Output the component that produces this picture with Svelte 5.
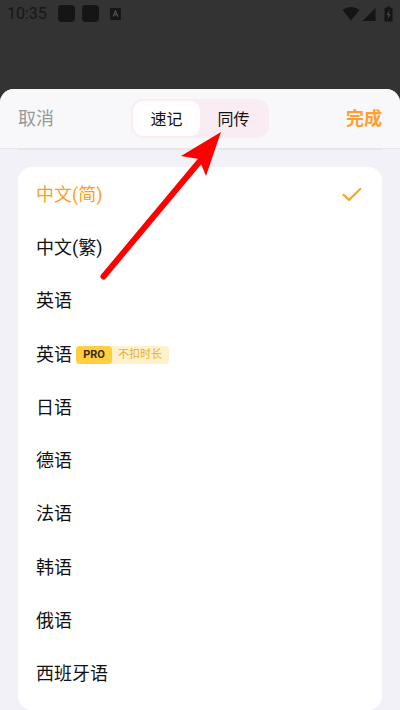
<script>
  const tabs = ['速记', '同传'];
  const languages = [
    { id: 'zh-hans', label: '中文(简)' },
    { id: 'zh-hant', label: '中文(繁)' },
    { id: 'en', label: '英语' },
    { id: 'en-pro', label: '英语', pro: true },
    { id: 'ja', label: '日语' },
    { id: 'de', label: '德语' },
    { id: 'fr', label: '法语' },
    { id: 'ko', label: '韩语' },
    { id: 'ru', label: '俄语' },
    { id: 'es', label: '西班牙语' }
  ];

  let activeTab = $state('速记');
  let selected = $state('zh-hans');
</script>

<div class="screen">
  <div class="status-bar">
    <span class="clock">10:35</span>
    <span class="app-dot"></span>
    <span class="app-dot"></span>
    <svg class="app-badge" width="11" height="12" viewBox="0 0 11 12" aria-hidden="true">
      <rect width="11" height="12" rx="1" fill="#171717" />
      <path d="M3.200 8.500 5.500 3 7.800 8.500M4 6.800h3" fill="none" stroke="#555555" stroke-width="1.1" />
    </svg>
    <svg class="system" width="51" height="16" viewBox="0 0 51 16" fill="#151515" aria-hidden="true">
      <path d="M0.500 4Q9 -2 17.500 4L9 14.500z" />
      <path d="M33.500 2v13H20.500z" />
      <path d="M42.500 2h2V.5h4V2h2v13.500h-8z" />
      <path d="M47.500 4l-3 5h1.800l-.8 4.500 3.200-5.500H46.800z" fill="#454545" />
    </svg>
  </div>

  <main class="sheet">
    <header>
      <button type="button" class="cancel">取消</button>
      <div class="tabs" role="tablist">
        {#each tabs as tab}
          <button
            type="button"
            role="tab"
            class="tab"
            class:active={activeTab === tab}
            aria-selected={activeTab === tab}
            onclick={() => (activeTab = tab)}
          >{tab}</button>
        {/each}
      </div>
      <button type="button" class="done">完成</button>
    </header>

    <div class="content">
      <div class="languages" role="radiogroup" aria-label="语言">
        {#each languages as lang (lang.id)}
          <label class="row" class:selected={selected === lang.id}>
            <input type="radio" name="language" value={lang.id} bind:group={selected} />
            <span>{lang.label}</span>
            {#if lang.pro}
              <span class="badge">
                <b>PRO</b>
                <span class="badge-note">不扣时长</span>
              </span>
            {/if}
            {#if selected === lang.id}
              <svg class="check" width="20" height="14" viewBox="0 0 20 14" aria-hidden="true">
                <path d="M1.500 6.700 7 12 18.200 1" />
              </svg>
            {/if}
          </label>
        {/each}
      </div>
    </div>
  </main>

  <svg class="pointer" width="122" height="150" viewBox="0 0 122 150" aria-hidden="true">
    <path d="M3.500 144.500 100 29" fill="none" stroke="#f00" stroke-width="6" stroke-linecap="round" />
    <path d="M121 0 81 24 99 27 106 44z" fill="#f00" />
  </svg>
</div>

<style>
  :global(body) {
    margin: 0;
    background: #333333;
  }

  .screen {
    position: relative;
    display: flex;
    flex-direction: column;
    box-sizing: border-box;
    min-height: 100vh;
    background: #333333;
    font-family: Roboto, "Noto Sans CJK SC", sans-serif;
    color: #111111;
  }

  .status-bar {
    display: flex;
    align-items: center;
    box-sizing: border-box;
    height: 89px;
    padding: 4px 7px 66px;
    color: #171717;
  }

  .clock {
    margin-right: 11px;
    font-size: 16px;
    line-height: 20px;
  }

  .app-dot {
    width: 17px;
    height: 17px;
    margin-right: 7px;
    border-radius: 4px;
    background: #151515;
  }

  .app-badge {
    margin-left: 4px;
  }

  .system {
    margin-left: auto;
  }

  .sheet {
    flex: 1;
    display: flex;
    flex-direction: column;
    border-radius: 14px 14px 0 0;
    background: #f2f1f7;
    overflow: hidden;
  }

  header {
    display: grid;
    grid-template-columns: 1fr auto 1fr;
    align-items: center;
    box-sizing: border-box;
    height: 60px;
    padding: 0 18px;
    border-bottom: 1px solid #e8e8ea;
    background: #f8f8fa;
  }

  button {
    padding: 0;
    border: 0;
    background: none;
    font-family: inherit;
    color: inherit;
    cursor: pointer;
  }

  .cancel,
  .done {
    padding-top: 1px;
    font-size: 18px;
    line-height: 24px;
  }

  .cancel {
    justify-self: start;
    color: #999999;
  }

  .done {
    justify-self: end;
    font-weight: 700;
    color: #ffa02e;
  }

  .tabs {
    display: flex;
    padding: 2px;
    border-radius: 12px;
    background: #f9ecf3;
  }

  .tab {
    width: 67px;
    height: 35px;
    padding-bottom: 2px;
    border-radius: 10px;
    font-size: 16px;
  }

  .tab.active {
    background: #ffffff;
  }

  .content {
    flex: 1;
    display: flex;
    flex-direction: column;
    padding: 0 18px;
  }

  /* inset hairline under the header */
  .content::before {
    content: "";
    height: 1px;
    background: #e7e6ea;
  }

  .languages {
    flex: 1;
    display: flex;
    flex-direction: column;
    margin-top: 17px;
    padding: 1px 0 9px;
    border-radius: 14px;
    background: #ffffff;
  }

  .row {
    flex: 1;
    display: flex;
    align-items: center;
    min-height: 53px;
    padding: 0 20px 0 18px;
    font-size: 18px;
    line-height: 24px;
    cursor: pointer;
  }

  .row input {
    position: absolute;
    width: 1px;
    height: 1px;
    margin: 0;
    opacity: 0;
  }

  .row.selected {
    color: #ff9f1c;
  }

  .badge {
    display: flex;
    margin-left: 4px;
    border-radius: 4px;
    background: #fff1cc;
    font-size: 11px;
    line-height: 18px;
  }

  .badge b {
    width: 36px;
    border-radius: 4px;
    background: #ffcf40;
    color: #3a2a08;
    text-align: center;
  }

  .badge-note {
    padding: 0 7px 0 6px;
    color: #e2b032;
  }

  .check {
    margin-left: auto;
  }

  .check path {
    fill: none;
    stroke: #ff9f1c;
    stroke-width: 2;
    stroke-linecap: round;
    stroke-linejoin: round;
  }

  /* the pointer floats over the tabs and the list */
  .pointer {
    position: absolute;
    top: 132px;
    left: 50%;
    margin-left: -100px;
    pointer-events: none;
  }
</style>
